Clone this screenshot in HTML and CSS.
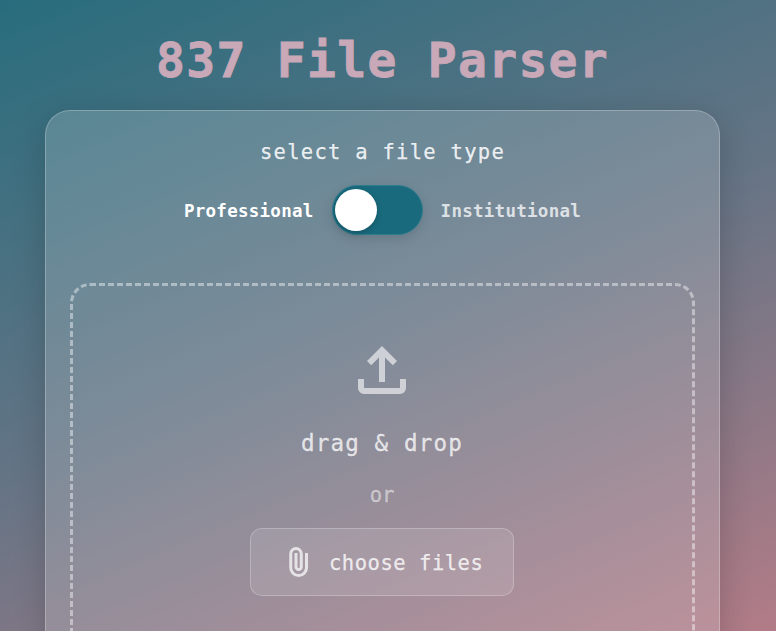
FILE: index.html
```html
<!DOCTYPE html>
<html lang="en">
<head>
<meta charset="utf-8">
<title>837 File Parser</title>
<link rel="stylesheet" href="styles.css">
</head>
<body>
<main class="page">
  <h1 class="title">837 File Parser</h1>
  <section class="card">
    <p class="prompt">select a file type</p>
    <div class="types">
      <span class="type active">Professional</span>
      <span class="toggle"><span class="knob"></span></span>
      <span class="type">Institutional</span>
    </div>
    <div class="drop">
      <svg class="upload" viewBox="4 4 16 16"><path d="M11 16V7.85l-2.6 2.6L7 9l5-5 5 5-1.4 1.45-2.6-2.6V16h-2Zm-5 4q-.825 0-1.412-.587Q4 18.825 4 18v-3h2v3h12v-3h2v3q0 .825-.587 1.413Q18.825 20 18 20H6Z"/></svg>
      <p class="drag">drag &amp; drop</p>
      <p class="or">or</p>
      <button class="choose">
        <svg class="clip" viewBox="0 0 24 24"><path d="M18 15.75q0 2.6-1.825 4.425T11.75 22q-2.6 0-4.425-1.825T5.5 15.75V6.5q0-1.875 1.313-3.187T10 2q1.875 0 3.188 1.313T14.5 6.5v8.75q0 1.15-.8 1.95t-1.95.8q-1.15 0-1.95-.8T9 15.25V6h2v9.25q0 .325.213.538t.537.212q.325 0 .538-.213t.212-.537V6.5q-.025-1.05-.737-1.775T10 4q-1.05 0-1.775.725T7.5 6.5v9.25q-.025 1.775 1.225 3.013T11.75 20q1.75 0 2.975-1.237T16 15.75V6h2v9.75Z"/></svg>
        <span class="choose-label">choose files</span>
      </button>
    </div>
  </section>
</main>
</body>
</html>
```
FILE: styles.css
```css
* { box-sizing: border-box; }
html, body { height: 100%; margin: 0; }
body {
  overflow: hidden;
  background: linear-gradient(157deg, #286d7d 0%, #647485 50%, #b27c87 100%);
  font-family: "DejaVu Sans Mono", monospace;
  color: #fff;
}
p, h1 { margin: 0; white-space: pre; }
.page {
  width: 765px;
  height: 100%;
  padding: 30px 45px 0;
}
.title {
  height: 60px;
  margin-bottom: 20px;
  font-size: 48px;
  line-height: 60px;
  letter-spacing: 1.3px;
  text-align: center;
  color: #c9a8b8;
  -webkit-text-stroke: .8px #c9a8b8;
}
.card {
  height: 760px;
  padding: 26px 24px 24px;
  border: 1px solid rgba(255, 255, 255, .25);
  border-radius: 25px;
  background: rgba(255, 255, 255, .17);
  box-shadow: 0 8px 32px rgba(0, 0, 0, .18);
}
.prompt {
  font-size: 20.5px;
  line-height: 30px;
  letter-spacing: 1.28px;
  text-align: center;
  color: rgba(255, 255, 255, .87);
  -webkit-text-stroke: .25px;
}
.types {
  display: flex;
  gap: 18px;
  align-items: center;
  justify-content: center;
  height: 50px;
  margin: 18px 0 48px;
}
.type {
  padding-top: 2px;
  font-size: 17.5px;
  font-weight: bold;
  line-height: 48px;
  letter-spacing: .27px;
  color: rgba(255, 255, 255, .75);
}
.active { color: #fff; }
.toggle {
  display: flex;
  align-items: center;
  width: 91px;
  height: 50px;
  padding-left: 2px;
  border: 1px solid #2f7c8f;
  border-radius: 25px;
  background: #196a7d;
  box-shadow: 0 4px 12px rgba(0, 0, 0, .12);
}
.knob {
  width: 42px;
  height: 42px;
  border-radius: 50%;
  background: #fff;
  box-shadow: 0 2px 6px rgba(0, 0, 0, .2);
}
.drop {
  display: flex;
  flex-direction: column;
  align-items: center;
  height: 440px;
  padding: 60px 1px 0 0;
  border: 3px dashed rgba(255, 255, 255, .43);
  border-radius: 20px;
}
.upload {
  width: 48px;
  height: 48px;
  margin-bottom: 34px;
  fill: rgba(255, 255, 255, .6);
}
.drag {
  margin-bottom: 22px;
  font-size: 22.5px;
  line-height: 30px;
  letter-spacing: 1.2px;
  color: rgba(255, 255, 255, .75);
  -webkit-text-stroke: .3px;
}
.or {
  margin-bottom: 18px;
  font-size: 20.5px;
  line-height: 30px;
  color: rgba(255, 255, 255, .48);
  -webkit-text-stroke: .3px;
}
.choose {
  display: flex;
  align-items: center;
  gap: 12px;
  width: 264px;
  height: 68px;
  padding: 0 0 0 30px;
  border: 1px solid rgba(255, 255, 255, .24);
  border-radius: 12px;
  background: rgba(255, 255, 255, .11);
  font: 20.5px/30px "DejaVu Sans Mono", monospace;
  letter-spacing: .52px;
  color: rgba(255, 255, 255, .8);
}
.choose-label {
  padding-top: 2px;
  -webkit-text-stroke: .25px;
}
.clip {
  width: 36px;
  height: 36px;
  fill: rgba(255, 255, 255, .72);
}
```
